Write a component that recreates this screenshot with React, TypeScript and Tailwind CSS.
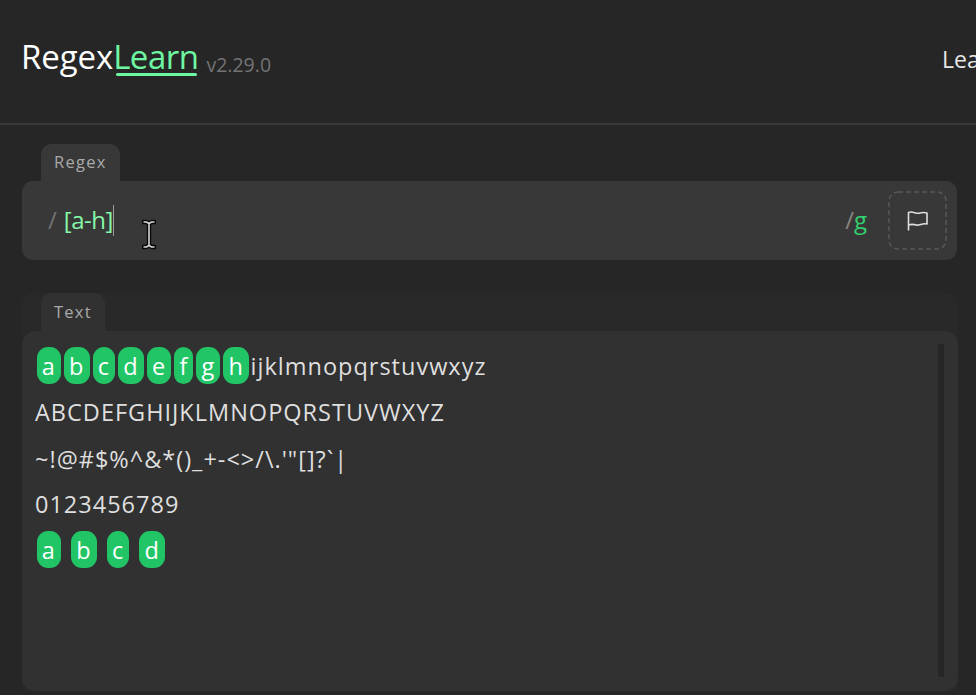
import React from "react";

function Chip({ children }: { children: string }) {
  return (
    <span className="mx-[1.5px] inline-block h-[37px] rounded-[11px] bg-[#22c566] px-[5.2px] align-middle leading-[38px] font-medium tracking-[0.9px] text-white">
      {children}
    </span>
  );
}

function Tab({ children, className }: { children: string; className: string }) {
  return (
    <div className={`ml-[19px] flex h-[38px] w-fit items-center rounded-t-[10px] text-[#a9a9a9] ${className}`}>
      {children}
    </div>
  );
}

export default function App() {
  return (
    <div className="flex h-[695px] w-[976px] flex-col overflow-hidden bg-[#262626] font-['Open_Sans','Noto_Sans',sans-serif]">
      <header className="flex h-[125px] shrink-0 items-start justify-between border-b-2 border-[#383838] pl-[21px]">
        <div className="flex items-baseline pt-[36px]">
          <h1 className="flex text-[33px] leading-[42px] font-medium text-white">
            <span className="tracking-[-0.1px]">Regex</span>
            <span className="relative tracking-[-0.5px] text-[#6ef7a2]">
              Learn
              <span className="absolute right-[1px] bottom-[2px] left-[3px] h-[3.5px] rounded-full bg-[#6ef7a2]" />
            </span>
          </h1>
          <span className="relative top-[3px] ml-[8px] text-[19.5px] text-[#737373]">v2.29.0</span>
        </div>
        <nav className="w-[34px] pt-[42px] text-[23px] leading-[34px] whitespace-nowrap text-[#e5e5e5]">Lea</nav>
      </header>

      <main className="flex flex-col pl-[22px]">
        <section className="mt-[19px] w-[935px]">
          <Tab className="bg-[#383838] px-[13px] pb-[2px] text-[16.5px] tracking-[1.25px]">Regex</Tab>
          <div className="relative -mt-px flex h-[79px] items-center rounded-[11px] bg-[#383838] pr-[10px] pl-[26px] text-[24px]">
            <span className="pb-[2px] text-[#737373]">/</span>
            <span className="ml-[7px] pb-[2px] font-medium tracking-[-0.5px] text-[#86f7a8]">[a-h]</span>
            <span className="h-[31px] w-px bg-[#9a9a9a]" />
            <span className="ml-auto pb-[2px] text-[#8a8580]">/</span>
            <span className="mr-px pb-px font-medium text-[#34cf70]">g</span>
            <button className="ml-[20px] flex h-[59px] w-[59px] items-center justify-center">
              <svg width="59" height="59" viewBox="0 0 59 59" fill="none">
                <rect x="1" y="1" width="57" height="57" rx="9" stroke="#585858" strokeWidth="1.5" strokeDasharray="5 3" />
                <path d="M20.5 39.5V21.5C25 19.7 28 23.3 32 22C35 21 37 21.4 39 22V33C34 31.8 32 34.8 28.5 34C25 33 23 33 20.5 34" stroke="#dedede" strokeWidth="1.6" strokeLinejoin="round" />
              </svg>
            </button>
            <svg className="absolute top-[38px] left-[119px]" width="16" height="31" viewBox="0 0 16 31" fill="none">
              <path d="M1 3H5L8 4.5L11 3H15M8 4.5V26.5M1 28H5L8 26.5L11 28H15" stroke="#090909" strokeWidth="4.5" />
              <path d="M2.5 3H5.5L8 4.5L10.5 3H13.5M8 4.5V26.5M2.5 28H5.5L8 26.5L10.5 28H13.5" stroke="#d8d8d8" strokeWidth="1.6" />
            </svg>
          </div>
        </section>

        <section className="mt-[33px] w-[936px] rounded-t-[10px] bg-[#292929]">
          <Tab className="bg-[#313131] px-[13px] text-[16.5px] tracking-[1.25px]">Text</Tab>
          <div className="flex h-[360px] justify-between rounded-[14px] bg-[#313131] pt-[13px] pr-[14px] pl-[13px]">
            <div className="text-[23.5px] tracking-[1px] whitespace-pre text-[#dfdfdf]">
              <div className="flex h-[46px] pt-[3px] leading-[38px]">
                {"abcdefgh".split("").map((c) => (
                  <Chip key={c}>{c}</Chip>
                ))}
                <span>ijklmnopqrstuvwxyz</span>
              </div>
              <div className="h-[46px] leading-[45px]">ABCDEFGHIJKLMNOPQRSTUVWXYZ</div>
              <div className="h-[46px] leading-[46px]">{"~!@#$%^&*()_+-<>/\\.'\"[]?`|"}</div>
              <div className="h-[46px] leading-[45px]">0123456789</div>
              <div className="h-[46px] leading-[38px]">
                <Chip>a</Chip> <Chip>b</Chip> <Chip>c</Chip> <Chip>d</Chip>
              </div>
            </div>
            <div className="h-[333px] w-[6px] bg-[#262626]" />
          </div>
        </section>
      </main>
    </div>
  );
}
